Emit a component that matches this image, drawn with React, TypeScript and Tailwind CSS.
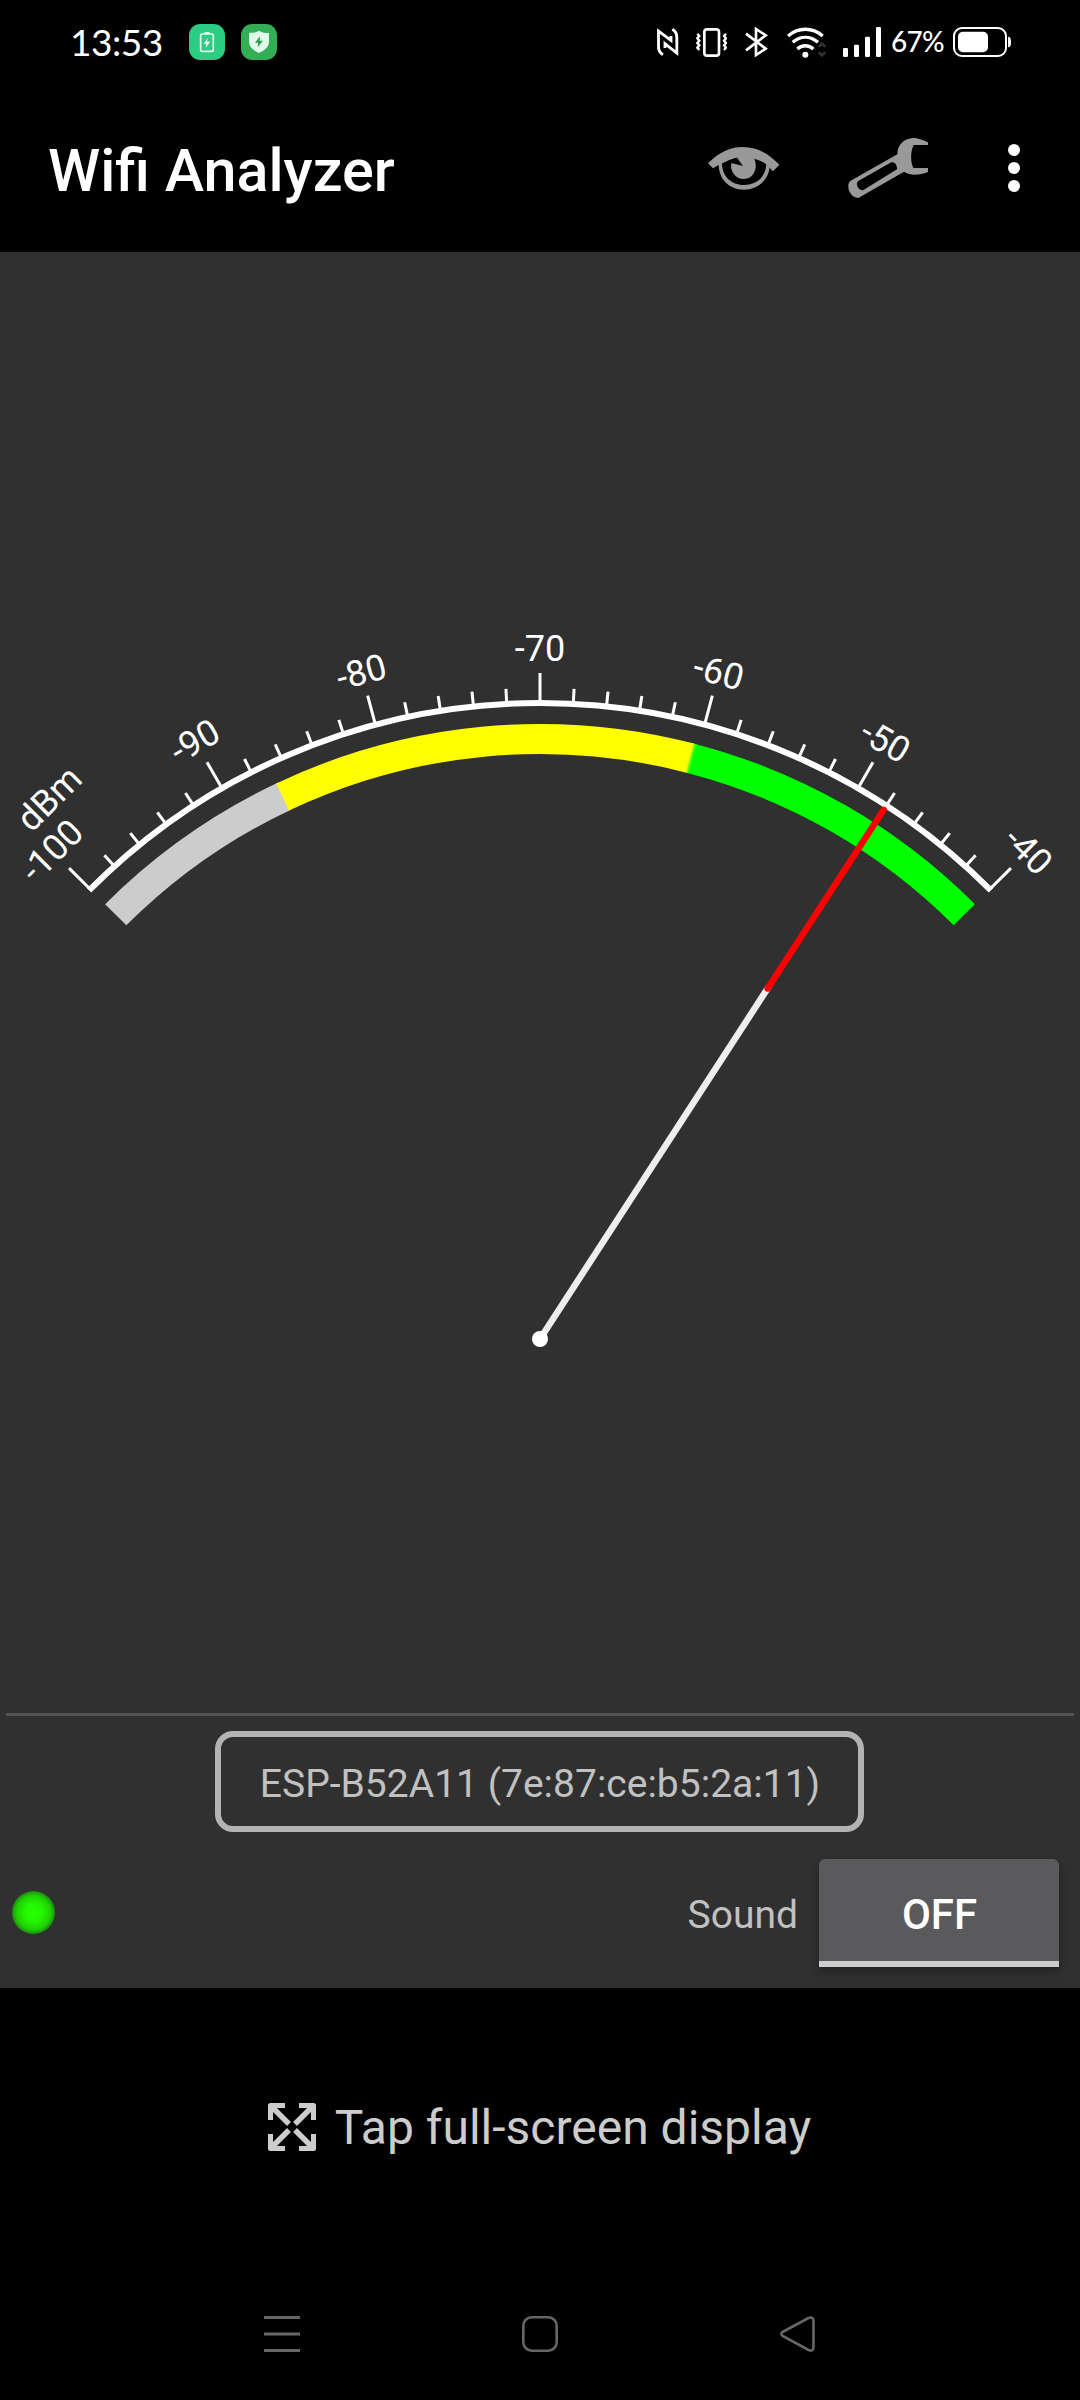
import React from 'react';

// Gauge geometry: 1.5 degrees per dBm, -70 dBm points straight up.
const CX = 540;
const CY = 1087;
const SCALE_R = 636;
const BAND_R = 600;

const toAngle = (dbm: number) => (dbm + 70) * 1.5;

const polar = (angle: number, r: number) => {
    const a = (angle * Math.PI) / 180;
    return { x: CX + r * Math.sin(a), y: CY - r * Math.cos(a) };
};

const arc = (from: number, to: number, r: number) => {
    const p = polar(from, r);
    const q = polar(to, r);
    return `M${p.x} ${p.y} A${r} ${r} 0 0 1 ${q.x} ${q.y}`;
};

const TICKS = Array.from({ length: 31 }, (_, i) => -100 + i * 2);
const LABELS = [-100, -90, -80, -70, -60, -50, -40];

const BANDS = [
    { from: -45, to: -25.2, color: '#cccccc' },
    { from: -25.4, to: 14.5, color: '#ffff00' },
    { from: 14.4, to: 14.6, color: '#b4ff00' },
    { from: 14.55, to: 14.8, color: '#50ff00' },
    { from: 14.7, to: 45, color: '#00ff00' },
];

const Gauge: React.FC<{ level: number }> = ({ level }) => {
    const angle = toAngle(level);
    return (
        <svg width="1080" height="1461" viewBox="0 0 1080 1461" className="block">
            {BANDS.map(b => (
                <path key={b.color} d={arc(b.from, b.to, BAND_R)} fill="none" stroke={b.color} strokeWidth="30" />
            ))}
            <path d={arc(-45.15, 45.15, SCALE_R)} fill="none" stroke="#fff" strokeWidth="6" />
            {TICKS.map(dbm => {
                const major = dbm % 10 === 0;
                const a = toAngle(dbm);
                const p = polar(a, SCALE_R);
                const q = polar(a, SCALE_R + (major ? 30 : 15));
                return <line key={dbm} x1={p.x} y1={p.y} x2={q.x} y2={q.y} stroke="#fff" strokeWidth="3" />;
            })}
            <g fill="#fff" fontSize="36" className="font-[Roboto,sans-serif]">
                {LABELS.map(dbm => (
                    <text key={dbm} x={CX} y={CY - 678} textAnchor="middle" transform={`rotate(${toAngle(dbm)} ${CX} ${CY})`}>
                        {dbm}
                    </text>
                ))}
                <text x={CX - 2} y={CY - 717} transform={`rotate(-45 ${CX} ${CY})`}>dBm</text>
            </g>
            <g transform={`rotate(${angle} ${CX} ${CY})`} strokeWidth="6.500">
                <line x1={CX} y1={CY} x2={CX} y2={CY - 420} stroke="#eeeeee" />
                <line x1={CX} y1={CY - 418} x2={CX} y2={CY - 631} stroke="#ff0000" strokeLinecap="round" />
            </g>
            <circle cx={CX} cy={CY} r="8" fill="#fff" />
        </svg>
    );
};

const StatusBar: React.FC = () => (
    <div className="flex h-[84px] items-center pl-[70px] pr-[69px] text-white">
        <span className="w-[119px] whitespace-nowrap pb-[2px] font-[Lato,sans-serif] text-[37px] leading-none tracking-[-0.5px]">13:53</span>
        <svg width="36" height="36" viewBox="0 0 108 108">
            <rect width="108" height="108" rx="34" fill="#2bce80" />
            <rect x="35" y="30" width="38" height="52" rx="5" fill="none" stroke="#e6fff2" strokeWidth="5" />
            <rect x="46" y="24" width="16" height="6" rx="2" fill="#e6fff2" />
            <path d="M56 42 L44 59 H52 L50 72 L63 53 H54 Z" fill="#fff" />
        </svg>
        <svg width="36" height="36" viewBox="0 0 108 108" className="ml-4">
            <rect width="108" height="108" rx="34" fill="#34ae55" />
            <path d="M54 20 C64 26 72 27 84 27 V52 C84 70 70 80 54 87 C38 80 24 70 24 52 V27 C36 27 44 26 54 20 Z" fill="#e0fbea" />
            <path d="M57 37 L42 56 H52 L50 70 L66 50 H56 Z" fill="#2c9c4a" />
        </svg>

        {/* nfc */}
        <svg width="22" height="28" viewBox="0 0 66 84" className="ml-auto" fill="none" stroke="#fff" strokeWidth="8.5">
            <path d="M18 80 C8 74 4.5 68 4.5 56 V9 L42 37 V24" />
            <path d="M46 4 C56 10 59.5 18 59.5 28 V75 L24 47 V60" />
        </svg>
        {/* vibrate */}
        <svg width="31" height="29" viewBox="0 0 93 87" className="ml-[17px]" fill="none" stroke="#fff">
            <rect x="25" y="4" width="44" height="79" rx="8" strokeWidth="8" />
            <path d="M4 17 L10 24 L4 31 L10 38 L4 45 L10 52 L4 59 L10 66 M90 17 L84 24 L90 31 L84 38 L90 45 L84 52 L90 59 L84 66" strokeWidth="7" />
        </svg>
        {/* bluetooth */}
        <svg width="23" height="30" viewBox="0 0 69 90" className="ml-[18px]" fill="none" stroke="#fff" strokeWidth="8">
            <path d="M3 20 L62 65 L33 84 V6 L62 25 L3 70" />
        </svg>
        {/* wifi */}
        <svg width="40" height="31" viewBox="0 0 120 93" className="ml-[19px]" fill="none" stroke="#fff" strokeWidth="10">
            <path d="M3 27 C34 0 76 0 107 27" />
            <path d="M17 46 C41 26 69 26 93 46" />
            <path d="M31 66 C45 53 65 53 79 66" />
            <circle cx="55" cy="83" r="9" fill="#fff" stroke="none" />
            <path d="M95 59 L105 50 L115 59 M95 76 L105 85 L115 76" stroke="#303030" strokeWidth="8" />
        </svg>
        {/* signal */}
        <svg width="38" height="30" viewBox="0 0 114 90" className="ml-[16px]" fill="#fff">
            <rect y="63" width="15" height="27" rx="4" />
            <rect x="33" y="53" width="15" height="37" rx="4" />
            <rect x="66" y="29" width="15" height="61" rx="4" />
            <rect x="99" width="15" height="90" rx="4" />
        </svg>
        <span className="ml-[10px] w-[53px] whitespace-nowrap pb-[2px] font-[Lato,sans-serif] text-[28px] font-medium leading-none tracking-[-0.8px]">67%</span>
        <svg width="58" height="30" viewBox="0 0 174 90" className="ml-[9px]" fill="#fff">
            <rect x="3" y="3" width="156" height="84" rx="24" fill="none" stroke="#fff" strokeWidth="6" />
            <rect x="15" y="14" width="90" height="62" rx="15" />
            <path d="M165 29 C172 29 174 34 174 45 C174 56 172 61 165 61 Z" />
        </svg>
    </div>
);

const AppBar: React.FC = () => (
    <header className="flex h-[168px] items-center pl-[48px] pr-[60px]">
        <h1 className="flex-1 pt-[5px] font-[Roboto,sans-serif] text-[59.3px] font-medium leading-none text-white">Wifi Analyzer</h1>
        <svg width="72" height="43" viewBox="85 117 216 129" fill="#999">
            <path d="M85 166 C120 130 155 117 190 117 C240 117 275 145 299 170 L280 190 L262 172 C250 160 238 156 224 153 C210 148 190 148 172 149 C150 153 130 165 118 170 L100 181 Z" />
            <path d="M117 168 C117 215 150 245 192 245 C235 245 268 215 270 174 L260 168 C258 208 230 231 192 231 C155 231 127 205 127 165 Z" />
            <path d="M190 174 L155 165 C150 190 168 213 192 213 C222 213 236 180 224 153 L200 140 L172 149 Z" />
        </svg>
        <svg width="80" height="60" viewBox="504 84 240 180" className="ml-[68px]" fill="#999">
            <path fillRule="evenodd" d="M744 97 C726 89 714 84 700 84 C670 86 652 106 652 133 L512 212 C497 222 506 262 535 264 L672 185 C690 197 715 197 744 186 V174 H700 C691 155 691 125 701 105 H744 Z M535 213 L634 157 C646 154 652 168 651 178 L549 241 C536 242 524 222 535 213 Z" />
        </svg>
        <svg width="12" height="48" viewBox="0 0 12 48" className="ml-[80px]" fill="#fff">
            <circle cx="6" cy="6" r="6" />
            <circle cx="6" cy="24" r="6" />
            <circle cx="6" cy="42" r="6" />
        </svg>
    </header>
);

const NavBar: React.FC = () => (
    <nav className="flex h-[132px] items-center justify-between px-[264px]">
        <svg width="36" height="36" viewBox="0 0 36 36" fill="#666">
            <rect width="36" height="3" />
            <rect y="16.5" width="36" height="3" />
            <rect y="33" width="36" height="3" />
        </svg>
        <svg width="36" height="36" viewBox="0 0 36 36" fill="none" stroke="#666" strokeWidth="2.6">
            <rect x="1.3" y="1.3" width="33.4" height="33.4" rx="8.5" />
        </svg>
        <svg width="36" height="36" viewBox="0 0 36 36" fill="none" stroke="#666" strokeWidth="2.6">
            <path d="M2.6 16 L28.5 2 Q33.5 0 33.5 5 V31 Q33.5 36 28.5 34 L2.6 20 Q0 18 2.6 16 Z" />
        </svg>
    </nav>
);

const App: React.FC = () => (
    <div className="flex h-[2400px] w-[1080px] flex-col bg-black font-[Roboto,sans-serif]">
        <StatusBar />
        <AppBar />

        <main className="flex h-[1736px] flex-col bg-[#303030]">
            <Gauge level={-48} />
            <div className="mx-[6px] h-[3px] bg-[#525252]" />

            <div className="ml-[215px] mt-[15px] flex h-[101px] w-[649px] items-center justify-center rounded-[18px] border-[6px] border-[#b3b3b3] pl-[1px] pt-[6px]">
                <span className="whitespace-nowrap text-[39px] leading-none text-[#c1c1c1]">ESP-B52A11 (7e:87:ce:b5:2a:11)</span>
            </div>

            <div className="mt-[27px] flex h-[108px] items-center pl-[12px] pr-[21px]">
                <div className="mb-[1px] h-[43px] w-[43px] rounded-full bg-[radial-gradient(circle_closest-side,#26ff00_0%,#24f800_40%,#1fce00_80%,#1c8a10_100%)]" />
                <span className="ml-auto pt-[4px] text-[39px] leading-none text-[#c1c1c1]">Sound</span>
                <button className="ml-[21px] h-[108px] w-[240px] rounded-t-[6px] border-b-[6px] border-[#cccccc] bg-[#5a5a5c] pl-[1px] pt-[9px] text-[42px] font-medium leading-none text-white shadow-[0_4px_8px_rgba(0,0,0,0.35)]">
                    OFF
                </button>
            </div>
        </main>

        <footer className="flex h-[280px] items-center justify-center gap-[19px] pr-[1px] text-[#cccccc]">
            <svg width="48" height="48" viewBox="0 0 48 48" fill="none" stroke="#ccc" strokeWidth="5" className="mb-[2px]">
                <path d="M2.5 17 V2.5 H17 M31 2.5 H45.5 V17 M45.5 31 V45.5 H31 M17 45.5 H2.5 V31" strokeLinejoin="round" />
                <path d="M3 3 L21 21 M45 3 L27 21 M3 45 L21 27 M45 45 L27 27" strokeWidth="5.5" />
            </svg>
            <span className="whitespace-nowrap text-[48px] leading-none">Tap full-screen display</span>
        </footer>

        <NavBar />
    </div>
);

export default App;
